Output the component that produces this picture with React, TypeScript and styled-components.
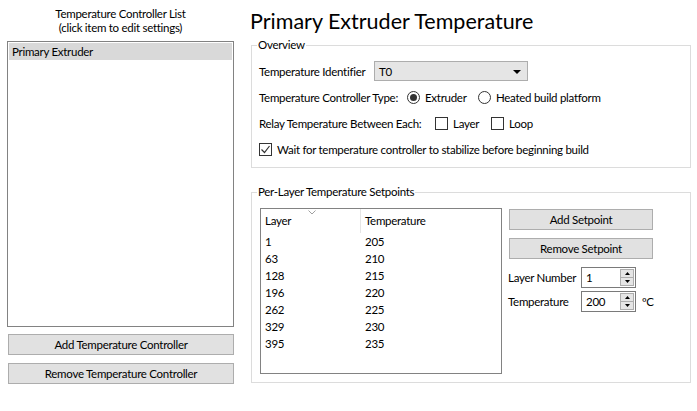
import React from 'react';
import styled, { createGlobalStyle } from 'styled-components';

const GlobalStyle = createGlobalStyle`
  html, body {
    margin: 0;
    padding: 0;
    background: #ffffff;
  }
  body {
    font-family: Lato, "Liberation Sans", sans-serif;
    font-size: 11.5px;
    letter-spacing: -0.28px;
    color: #000000;
  }
`;

const controllers = ['Primary Extruder'];

const setpoints = [
  { layer: 1, temp: 205 },
  { layer: 63, temp: 210 },
  { layer: 128, temp: 215 },
  { layer: 196, temp: 220 },
  { layer: 262, temp: 225 },
  { layer: 329, temp: 230 },
  { layer: 395, temp: 235 },
];

const Window = styled.div`
  display: flex;
  width: 697px;
  height: 411px;
  box-sizing: border-box;
  overflow: hidden;
`;

const LeftColumn = styled.div`
  display: flex;
  flex-direction: column;
  width: 227px;
  margin-left: 7px;
  padding-top: 7px;
`;

const ListTitle = styled.div`
  text-align: center;
  line-height: 14px;
  height: 28px;
`;

const ListBox = styled.div`
  margin-top: 6px;
  height: 286px;
  box-sizing: border-box;
  border: 1px solid #828282;
  padding: 1px;
`;

const ListItem = styled.div<{ $selected?: boolean }>`
  height: 17px;
  line-height: 17px;
  padding-left: 3px;
  background: ${(p) => (p.$selected ? '#d9d9d9' : 'transparent')};
`;

const Button = styled.button<{ $width?: number }>`
  display: block;
  box-sizing: border-box;
  width: ${(p) => (p.$width ? `${p.$width}px` : '100%')};
  height: 21px;
  padding: 0;
  border: 1px solid #adadad;
  background: #e1e1e1;
  font-family: inherit;
  font-size: 11.5px;
  letter-spacing: -0.28px;
  color: #000;
  line-height: 19px;
`;

const LeftButton = styled(Button)`
  margin-left: 1px;
  width: 226px;
  margin-top: 7px;
  & + & {
    margin-top: 8px;
  }
`;

const RightColumn = styled.div`
  display: flex;
  flex-direction: column;
  width: 440px;
  margin-left: 17px;
`;

const Heading = styled.h1`
  margin: 5px 0 0 -1px;
  height: 33px;
  line-height: 32px;
  font-size: 21.5px;
  letter-spacing: 0;
  font-weight: 400;
`;

const GroupBox = styled.fieldset<{ $gap?: number }>`
  margin: ${(p) => p.$gap ?? 0}px 0 0 0;
  padding: 0 7px;
  border: 1px solid #dcdcdc;
  min-width: 0;
`;

const Legend = styled.legend`
  margin-left: -2px;
  padding: 0 1px;
  line-height: 14px;
`;

const Rows = styled.div`
  display: flex;
  flex-direction: column;
  gap: 6px;
  padding: 9px 0 8px;
`;

const Row = styled.div`
  display: flex;
  align-items: center;
  height: 20px;
`;

const Label = styled.span<{ $width?: number }>`
  flex: none;
  width: ${(p) => (p.$width ? `${p.$width}px` : 'auto')};
  white-space: nowrap;
`;

const Combo = styled.div`
  position: relative;
  display: flex;
  align-items: center;
  box-sizing: border-box;
  width: 154px;
  height: 20px;
  padding-left: 4px;
  border: 1px solid #adadad;
  background: #e5e5e5;
`;

const ComboArrow = styled.svg`
  position: absolute;
  right: 6px;
  top: 8px;
`;

const Option = styled.label<{ $width?: number }>`
  display: flex;
  align-items: center;
  gap: 5px;
  flex: none;
  width: ${(p) => (p.$width ? `${p.$width}px` : 'auto')};
  white-space: nowrap;
`;

const RadioMark = styled.span<{ $checked?: boolean }>`
  position: relative;
  box-sizing: border-box;
  width: 13px;
  height: 13px;
  border: 1px solid #333333;
  border-radius: 50%;
  background: #fff;
  &::after {
    content: '';
    display: ${(p) => (p.$checked ? 'block' : 'none')};
    position: absolute;
    left: 2px;
    top: 2px;
    width: 7px;
    height: 7px;
    border-radius: 50%;
    background: #333333;
  }
`;

const CheckMark = styled.span`
  display: flex;
  align-items: center;
  justify-content: center;
  box-sizing: border-box;
  width: 13px;
  height: 13px;
  border: 1px solid #333333;
  background: #fff;
`;

const SetpointBody = styled.div`
  display: flex;
  gap: 7px;
  padding: 9px 0 8px 1px;
`;

const ListView = styled.div`
  box-sizing: border-box;
  width: 242px;
  height: 166px;
  border: 1px solid #828282;
`;

const ListHeader = styled.div`
  display: flex;
  height: 24px;
`;

const HeaderCell = styled.div<{ $width?: number; $divider?: boolean }>`
  position: relative;
  box-sizing: border-box;
  width: ${(p) => (p.$width ? `${p.$width}px` : 'auto')};
  flex: ${(p) => (p.$width ? 'none' : '1')};
  padding: 4px 0 0 4px;
  line-height: 16px;
  border-right: ${(p) => (p.$divider ? '1px solid #e5e5e5' : 'none')};
`;

const SortGlyph = styled.svg`
  position: absolute;
  left: 47px;
  top: 1px;
`;

const DataRow = styled.div`
  display: flex;
  height: 17px;
  line-height: 17px;
`;

const DataCell = styled.div<{ $width?: number }>`
  box-sizing: border-box;
  width: ${(p) => (p.$width ? `${p.$width}px` : 'auto')};
  flex: ${(p) => (p.$width ? 'none' : '1')};
  padding-left: 4px;
`;

const SidePanel = styled.div`
  display: flex;
  flex-direction: column;
  padding-top: 1px;
`;

const SideButton = styled(Button)`
  & + & {
    margin-top: 8px;
  }
`;

const SpinRow = styled.div<{ $gap: number }>`
  display: flex;
  align-items: center;
  margin-top: ${(p) => p.$gap}px;
  margin-left: -1px;
  height: 21px;
`;

const SpinBox = styled.div`
  position: relative;
  display: flex;
  align-items: center;
  box-sizing: border-box;
  width: 55px;
  height: 21px;
  padding-left: 4px;
  border: 1px solid #7a7a7a;
  background: #fff;
`;

const SpinButtons = styled.div`
  position: absolute;
  right: 1px;
  top: 1px;
  bottom: 1px;
  width: 14px;
  display: flex;
  flex-direction: column;
`;

const SpinHalf = styled.div`
  flex: 1;
  display: flex;
  align-items: center;
  justify-content: center;
  box-sizing: border-box;
  border: 1px solid #adadad;
  background: #e5e5e5;
  & + & {
    border-top: none;
  }
`;

const Unit = styled.span`
  margin-left: 6px;
`;

const Spinner = ({ value }: { value: string }) => (
  <SpinBox>
    {value}
    <SpinButtons>
      <SpinHalf>
        <svg width="5" height="3" viewBox="0 0 5 3">
          <polygon points="2.5,0 5,3 0,3" fill="#000" />
        </svg>
      </SpinHalf>
      <SpinHalf>
        <svg width="5" height="3" viewBox="0 0 5 3">
          <polygon points="0,0 5,0 2.5,3" fill="#000" />
        </svg>
      </SpinHalf>
    </SpinButtons>
  </SpinBox>
);

const Check = () => (
  <svg width="11" height="11" viewBox="0 0 11 11">
    <polyline points="1.5,5.5 4.5,8.5 9.5,2" fill="none" stroke="#333" strokeWidth="1.2" />
  </svg>
);

export default function App() {
  return (
    <>
      <GlobalStyle />
      <Window>
        <LeftColumn>
          <ListTitle>
            Temperature Controller List
            <br />
            (click item to edit settings)
          </ListTitle>
          <ListBox>
            {controllers.map((c, i) => (
              <ListItem key={c} $selected={i === 0}>
                {c}
              </ListItem>
            ))}
          </ListBox>
          <LeftButton>Add Temperature Controller</LeftButton>
          <LeftButton>Remove Temperature Controller</LeftButton>
        </LeftColumn>

        <RightColumn>
          <Heading>Primary Extruder Temperature</Heading>

          <GroupBox>
            <Legend>Overview</Legend>
            <Rows>
              <Row>
                <Label $width={115}>Temperature Identifier</Label>
                <Combo>
                  T0
                  <ComboArrow width="8" height="4" viewBox="0 0 8 4">
                    <polygon points="0,0 8,0 4,4" fill="#000" />
                  </ComboArrow>
                </Combo>
              </Row>
              <Row>
                <Label $width={148}>Temperature Controller Type:</Label>
                <Option $width={71}>
                  <RadioMark $checked />
                  Extruder
                </Option>
                <Option>
                  <RadioMark />
                  Heated build platform
                </Option>
              </Row>
              <Row>
                <Label $width={176}>Relay Temperature Between Each:</Label>
                <Option $width={56}>
                  <CheckMark />
                  Layer
                </Option>
                <Option>
                  <CheckMark />
                  Loop
                </Option>
              </Row>
              <Row>
                <Option>
                  <CheckMark>
                    <Check />
                  </CheckMark>
                  Wait for temperature controller to stabilize before beginning build
                </Option>
              </Row>
            </Rows>
          </GroupBox>

          <GroupBox $gap={17}>
            <Legend>Per-Layer Temperature Setpoints</Legend>
            <SetpointBody>
              <ListView>
                <ListHeader>
                  <HeaderCell $width={100} $divider>
                    Layer
                    <SortGlyph width="8" height="5" viewBox="0 0 8 5">
                      <polyline points="0.5,0.5 4,4 7.5,0.5" fill="none" stroke="#a0a0a0" />
                    </SortGlyph>
                  </HeaderCell>
                  <HeaderCell>Temperature</HeaderCell>
                </ListHeader>
                {setpoints.map((s) => (
                  <DataRow key={s.layer}>
                    <DataCell $width={100}>{s.layer}</DataCell>
                    <DataCell>{s.temp}</DataCell>
                  </DataRow>
                ))}
              </ListView>
              <SidePanel>
                <SideButton $width={144}>Add Setpoint</SideButton>
                <SideButton $width={144}>Remove Setpoint</SideButton>
                <SpinRow $gap={8}>
                  <Label $width={73}>Layer Number</Label>
                  <Spinner value="1" />
                </SpinRow>
                <SpinRow $gap={3}>
                  <Label $width={73}>Temperature</Label>
                  <Spinner value="200" />
                  <Unit>ºC</Unit>
                </SpinRow>
              </SidePanel>
            </SetpointBody>
          </GroupBox>
        </RightColumn>
      </Window>
    </>
  );
}
